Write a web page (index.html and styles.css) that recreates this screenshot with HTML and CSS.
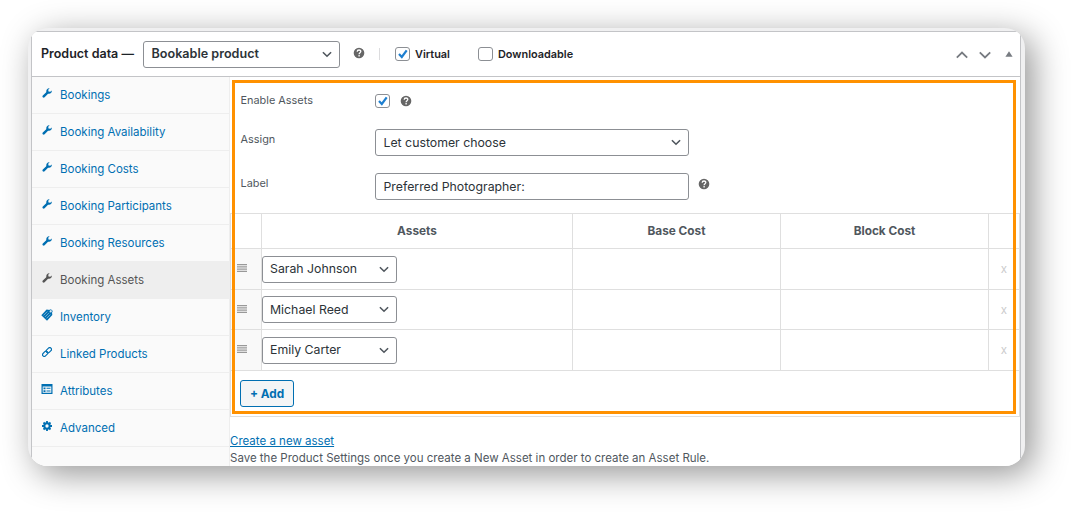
FILE: index.html
```html
<!DOCTYPE html>
<html lang="en">
<head>
  <meta charset="UTF-8">
  <meta name="viewport" content="width=device-width, initial-scale=1.0">
  <title>Product data</title>
  <link rel="stylesheet" href="styles.css">
</head>
<body>
  <!-- shared icons -->
  <svg class="sprite" width="0" height="0">
    <symbol id="wrench" viewBox="0 0 10 10"><path d="M9.700 2.600c.4 1.800-1.200 3.300-2.900 3.100-.4 0-.7 0-1 .3L2.600 9.300c-.5.5-1.300.5-1.800 0s-.5-1.300 0-1.800L4 4.500c.3-.3.300-.6.300-1C4.200 1.700 5.700.1 7.500.4L6.200 1.800l.3 1.600 1.800.400z"/></symbol>
    <symbol id="chevron" viewBox="0 0 10 7"><path d="M.9 1.200 5 5.200 9.100 1.200" fill="none" stroke="currentColor" stroke-width="1.600"/></symbol>
    <symbol id="help" viewBox="0 0 12 12"><circle cx="6" cy="6" r="5.300"/><path d="M4.200 4.700C4.200 2.400 7.900 2.500 7.800 4.500 7.700 5.700 6.100 5.700 6.100 7.200M6.100 8v1.400" fill="none" stroke="#fff" stroke-width="1.300"/></symbol>
    <symbol id="check" viewBox="0 0 12 12"><path d="M2.500 6 5.300 9 10.200 2.300" fill="none" stroke="#1e7fd0" stroke-width="2.200"/></symbol>
    <symbol id="handle" viewBox="0 0 10 8"><path d="M0 .5h10M0 2.800h10M0 5.100h10M0 7.400h10" stroke="#999" stroke-width="1.300"/></symbol>
  </svg>

  <div class="frame">
    <div class="postbox">
      <div class="header">
        <h2>Product data —</h2>
        <div class="select product-type"><span>Bookable product</span><svg><use href="#chevron"/></svg></div>
        <svg class="help"><use href="#help"/></svg>
        <span class="divider"></span>
        <label class="option virtual"><span class="checkbox"><svg><use href="#check"/></svg></span>Virtual</label>
        <label class="option"><span class="checkbox"></span>Downloadable</label>
        <div class="actions">
          <svg width="12" height="8" viewBox="0 0 12 8"><path d="M.8 6.700 6 1.500l5.200 5.200" fill="none" stroke="#787c82" stroke-width="1.800"/></svg>
          <svg width="12" height="8" viewBox="0 0 12 8"><path d="M.8 1.300 6 6.500l5.200-5.200" fill="none" stroke="#787c82" stroke-width="1.800"/></svg>
          <svg class="toggle" width="8" height="6" viewBox="0 0 8 6"><path d="M4 .2 7.600 5.800H.4z" fill="#787c82"/></svg>
        </div>
      </div>

      <div class="main">
        <ul class="tabs">
          <li><svg><use href="#wrench"/></svg><a>Bookings</a></li>
          <li><svg><use href="#wrench"/></svg><a>Booking Availability</a></li>
          <li><svg><use href="#wrench"/></svg><a>Booking Costs</a></li>
          <li><svg><use href="#wrench"/></svg><a>Booking Participants</a></li>
          <li><svg><use href="#wrench"/></svg><a>Booking Resources</a></li>
          <li class="active"><svg><use href="#wrench"/></svg><a>Booking Assets</a></li>
          <li><svg class="wide" viewBox="0 0 12 12"><path d="M.3 6.300 5.600.6l3 .3 2.400 2.500.3 2.600L6 11.700z"/><path d="m2.500 6.400 3.800-3.800M4 7.900l3.800-3.800M5.500 9.400l3.800-3.800" stroke="#a9cde4" stroke-width=".7"/><circle cx="9.300" cy="2.700" r=".8" fill="#fafafa"/><path d="M8.600.8c1.800-.4 2.900.6 2.600 2.300" fill="none" stroke="currentColor" stroke-width=".8"/></svg><a>Inventory</a></li>
          <li><svg viewBox="0 0 12 12"><g fill="none" stroke="currentColor" stroke-width="1.400"><rect x="4.600" y="1.800" width="7.200" height="4.200" rx="2.100" transform="rotate(-45 8.200 3.900)"/><rect x=".2" y="6.100" width="7.200" height="4.200" rx="2.100" transform="rotate(-45 3.800 8.200)"/></g></svg><a>Linked Products</a></li>
          <li><svg class="wide" viewBox="0 0 12 12"><path d="M.5 1h11v10H.5z"/><path d="M1.700 3.600h8.600v6.200H1.700z" fill="#fafafa"/><path d="M2.500 4.500h2v1.700h-2zM2.500 7.200h2v1.700h-2zM5.500 4.800h4v1h-4zM5.500 7.600h4v1h-4z"/></svg><a>Attributes</a></li>
          <li><svg viewBox="0 0 12 12"><circle cx="6" cy="6" r="3.200" fill="none" stroke="currentColor" stroke-width="2.400"/><path d="M6 0v2.500M6 9.500V12M0 6h2.500M9.500 6H12M1.800 1.800l1.800 1.800M8.400 8.400l1.800 1.800M1.800 10.200l1.800-1.800M8.400 3.600l1.800-1.800" stroke="currentColor" stroke-width="2.200"/></svg><a>Advanced</a></li>
        </ul>

        <div class="panel">
          <div class="fields">
            <div class="field enable"><span class="name">Enable Assets</span><span class="checkbox"><svg><use href="#check"/></svg></span><svg class="help"><use href="#help"/></svg></div>
            <div class="field"><span class="name">Assign</span><div class="select"><span>Let customer choose</span><svg><use href="#chevron"/></svg></div></div>
            <div class="field"><span class="name">Label</span><div class="select"><span>Preferred Photographer:</span></div><svg class="help"><use href="#help"/></svg></div>
          </div>

          <table class="assets">
            <thead>
              <tr><th class="sort"></th><th class="asset">Assets</th><th class="cost">Base Cost</th><th class="cost">Block Cost</th><th class="remove"></th></tr>
            </thead>
            <tbody>
              <tr class="row-tall"><td class="sort"><svg><use href="#handle"/></svg></td><td><div class="select"><span>Sarah Johnson</span><svg><use href="#chevron"/></svg></div></td><td></td><td></td><td class="remove">x</td></tr>
              <tr><td class="sort"><svg><use href="#handle"/></svg></td><td><div class="select"><span>Michael Reed</span><svg><use href="#chevron"/></svg></div></td><td></td><td></td><td class="remove">x</td></tr>
              <tr class="row-tall"><td class="sort"><svg><use href="#handle"/></svg></td><td><div class="select"><span>Emily Carter</span><svg><use href="#chevron"/></svg></div></td><td></td><td></td><td class="remove">x</td></tr>
            </tbody>
            <tfoot>
              <tr><td colspan="5"><button class="add">+ Add</button></td></tr>
            </tfoot>
          </table>

          <div class="note">
            <a>Create a new asset</a>
            <p>Save the Product Settings once you create a New Asset in order to create an Asset Rule.</p>
          </div>
        </div>
      </div>
    </div>
    <div class="highlight"></div>
  </div>
</body>
</html>
```
FILE: styles.css
```css
* {
  box-sizing: border-box;
}
body {
  margin: 0;
  padding: 28px;
  height: 520px;
  overflow: hidden;
  background: #fff;
  font-family: Inter, "Liberation Sans", sans-serif;
  font-size: 11.5px;
  color: #50575e;
}
svg {
  display: block;
  flex: none;
  fill: currentColor;
}
.sprite {
  position: absolute;
}
.frame {
  position: relative;
  width: 997px;
  height: 438px;
  padding: 3px 4px 0 3px;
  overflow: hidden;
  border-radius: 20px;
  background: #f0f0f1;
  box-shadow: 8px 8px 34px rgba(0, 0, 0, 0.42);
}
.postbox {
  height: 450px;
  border: 1px solid #c3c4c7;
  background: #fff;
}
.highlight {
  position: absolute;
  left: 204px;
  top: 52px;
  width: 784px;
  height: 334px;
  border: 3px solid #ff9100;
}

/* header */
.header {
  display: flex;
  align-items: center;
  height: 45px;
  padding-left: 9px;
  border-bottom: 1px solid #c3c4c7;
  color: #1d2327;
  font-weight: 600;
}
h2 {
  width: 102px;
  margin: 0;
  padding-bottom: 2px;
  font-size: 12.5px;
  font-weight: 600;
  white-space: nowrap;
}
.select {
  display: flex;
  align-items: center;
  justify-content: space-between;
  width: 314px;
  height: 27px;
  padding: 0 7px 0 7.5px;
  border: 1px solid #8c8f94;
  border-radius: 3px;
  background: #fff;
  color: #2c3338;
  font-size: 12.3px;
  white-space: nowrap;
}
.select span {
  padding-bottom: 1px;
}
.select svg {
  width: 10px;
  height: 7px;
  color: #50575e;
}
.product-type {
  width: 197px;
  font-size: 12.6px;
}
.help {
  width: 12px;
  height: 12px;
  color: #666;
}
.header .help {
  margin: 0 14px 3px 13px;
}
.divider {
  width: 1px;
  height: 12px;
  margin-right: 15px;
  background: #dcdcde;
}
.option {
  display: flex;
  align-items: center;
  font-size: 10.9px;
}
.virtual {
  width: 83px;
}
.checkbox {
  flex: none;
  width: 15px;
  height: 14px;
  margin-right: 5px;
  border: 1px solid #8c8f94;
  border-radius: 3px;
  background: #fff;
}
.checkbox svg {
  width: 13px;
  height: 12px;
}
.actions {
  display: flex;
  align-items: center;
  gap: 11px;
  margin-left: auto;
  padding: 2px 7px 0 0;
}
.toggle {
  margin: 0 0 2px 3px;
}

/* tabs on the left */
.main {
  display: flex;
  height: 403px;
}
.tabs {
  flex: none;
  width: 198px;
  margin: 0;
  padding: 0;
  list-style: none;
  border-right: 1px solid #eee;
  background: #fafafa;
}
.tabs li {
  display: flex;
  align-items: center;
  height: 37px;
  padding: 0 0 1px 10px;
  border-bottom: 1px solid #eee;
  color: #006fb2;
}
.tabs svg {
  width: 10px;
  height: 10px;
  margin: 0 8px 3px 0;
}
.tabs .wide {
  width: 12px;
  height: 12px;
  margin: 0 7px 3px -1px;
}
.tabs .active {
  background: #eee;
  color: #555;
}

/* panel */
.panel {
  flex: 1;
}
.fields {
  height: 136px;
  padding: 16px 0 0 10px;
}
.field {
  display: flex;
  height: 44px;
  font-size: 10.9px;
}
.field.enable {
  height: 36px;
}
.name {
  width: 135px;
  padding: 3px 0 0 0.5px;
}
.enable .name {
  padding-top: 0;
}
.enable .checkbox {
  margin-top: 1px;
}
.field .help {
  margin: 5px 0 0 9px;
}
.enable .help {
  margin: 2px 0 0 4.5px;
}
.assets {
  width: 790px;
  table-layout: fixed;
  border-collapse: collapse;
  border: 1px solid #dfdfdf;
}
.assets th,
.assets td {
  height: 40px;
  padding: 0;
  border: 1px solid #dfdfdf;
}
.assets th {
  height: 35px;
  font-size: 11.8px;
  font-weight: 700;
}
.assets .row-tall td {
  height: 41px;
}
.assets .sort {
  width: 31px;
}
.assets td.sort {
  background: #f9f9f9;
}
.sort svg {
  width: 10px;
  height: 8px;
  margin: 0 0 2px 6px;
}
.asset {
  width: 311px;
}
.cost {
  width: 208px;
}
.assets .select {
  width: 135px;
  padding-left: 7px;
}
.remove {
  color: #ccc;
  text-align: center;
}
.assets tfoot td {
  height: 46px;
  padding-left: 9px;
}
.add {
  display: block;
  width: 54px;
  height: 27px;
  padding: 0;
  border: 1px solid #006fb2;
  border-radius: 3px;
  background: #f3f5f6;
  color: #006fb2;
  font: 700 11.8px Inter, sans-serif;
}
.note {
  padding-top: 16px;
  line-height: 17px;
}
.note a {
  color: #006fb2;
  text-decoration: underline;
}
.note p {
  margin: 0;
}
```
